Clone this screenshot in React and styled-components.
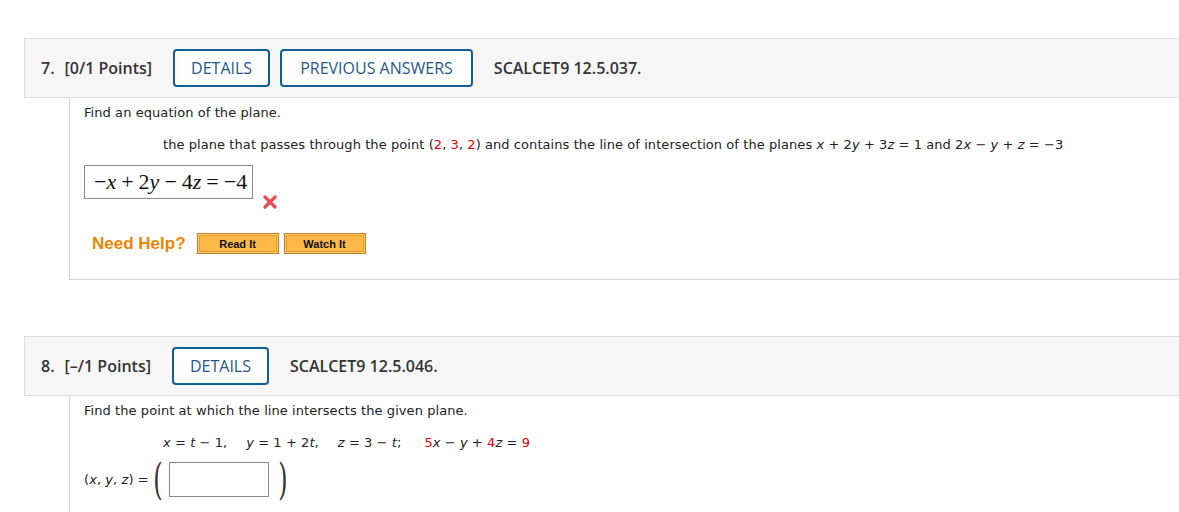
import React from "react";
import styled, { createGlobalStyle } from "styled-components";

const Global = createGlobalStyle`
  html, body { margin: 0; padding: 0; background: #fff; }
  body { font-family: "DejaVu Sans", Verdana, sans-serif; color: #222; }
`;

const Page = styled.div`
  padding: 38px 0 0 24px;
  width: 1155px;
`;

const Question = styled.section`
  margin-bottom: ${(p) => p.$gap || 0}px;
`;

const Header = styled.div`
  display: flex;
  align-items: center;
  height: 58px;
  background: #f6f6f6;
  border: 1px solid #dcdcdc;
  border-right: none;
  padding-left: 16px;
  font-family: "Open Sans", sans-serif;
  font-size: 16px;
  color: #333;
`;

const Num = styled.span`
  font-weight: 600;
  margin-right: 10px;
`;

const Points = styled.span`
  font-weight: 600;
  margin-right: 21px;
`;

const HeadButton = styled.button`
  height: 38px;
  box-sizing: border-box;
  padding: 0 ${(p) => p.$px || 16}px;
  margin-right: ${(p) => p.$mr || 0}px;
  border: 2px solid #0d5f96;
  border-radius: 4px;
  background: #fff;
  color: #1f5788;
  font-family: "Open Sans", sans-serif;
  font-size: 16px;
  cursor: pointer;
`;

const Code = styled.span`
  font-weight: 600;
`;

const Body = styled.div`
  margin-left: 45px;
  border-left: 1px solid #d4d4d4;
  border-bottom: ${(p) => (p.$open ? "none" : "1px solid #d4d4d4")};
  padding: 7px 0 0 14px;
  height: ${(p) => p.$h}px;
  box-sizing: border-box;
  font-size: 13px;
  line-height: 16px;
  letter-spacing: 0.07px;
`;

const Para = styled.p`
  margin: 0;
  padding-left: ${(p) => p.$indent || 0}px;
  margin-bottom: ${(p) => p.$mb || 0}px;
  white-space: nowrap;
`;

const Red = styled.span`
  color: #e00000;
`;

const V = styled.i`
  font-style: italic;
`;

const AnswerRow = styled.div`
  display: flex;
  align-items: flex-start;
`;

const AnswerBox = styled.div`
  width: 169px;
  height: 34px;
  box-sizing: border-box;
  border: 1px solid #8a8a8a;
  display: flex;
  align-items: center;
  padding-left: 9px;
  font-family: "Liberation Serif", "DejaVu Serif", serif;
  font-size: 22px;
  letter-spacing: 0;
  color: #111;
  white-space: nowrap;
`;

const Mi = styled.i`
  font-style: italic;
`;

const Op = styled.span`
  margin: 0 ${(p) => p.$m ?? 5}px;
`;

const Cross = styled.svg`
  margin: 30px 0 0 10px;
`;

const HelpRow = styled.div`
  display: flex;
  align-items: center;
  margin-top: 24px;
  padding-left: 8px;
`;

const NeedHelp = styled.span`
  font-family: "Liberation Sans", Arial, sans-serif;
  font-weight: bold;
  font-size: 17px;
  letter-spacing: 0;
  color: #f08400;
  margin-right: 11px;
`;

const HelpButton = styled.button`
  width: 82px;
  height: 21px;
  box-sizing: border-box;
  margin-right: 5px;
  border: 1px solid #c6791f;
  box-shadow: inset 0 0 0 1px #ffd27a, inset 0 0 0 2px #e59a2c;
  background: #fdb846;
  font-family: "Liberation Sans", Arial, sans-serif;
  font-weight: bold;
  font-size: 11px;
  color: #111;
  padding: 0;
  cursor: pointer;
`;

const Spread = styled.span`
  margin-right: ${(p) => p.$mr}px;
`;

const PointRow = styled.div`
  display: flex;
  align-items: center;
  margin-top: 11px;
`;

const Paren = styled.span`
  font-family: "DejaVu Serif", "Liberation Serif", serif;
  font-weight: 200;
  font-size: 30px;
  color: #333;
  display: inline-block;
  transform: scaleY(1.45) scaleX(0.8);
  margin: ${(p) => p.$m};
`;

const EmptyBox = styled.div`
  width: 100px;
  height: 35px;
  box-sizing: border-box;
  border: 1px solid #8a8a8a;
  background: #fff;
`;

export default function App() {
  return (
    <>
      <Global />
      <Page>
        <Question $gap={56}>
          <Header>
            <Num>7.</Num>
            <Points>[0/1 Points]</Points>
            <HeadButton $mr={10}>DETAILS</HeadButton>
            <HeadButton $mr={21} $px={18}>PREVIOUS ANSWERS</HeadButton>
            <Code>SCALCET9 12.5.037.</Code>
          </Header>
          <Body $h={182}>
            <Para $mb={16}>Find an equation of the plane.</Para>
            <Para $indent={79} $mb={12}>
              the plane that passes through the point (<Red>2</Red>, <Red>3</Red>, <Red>2</Red>) and contains the line of
              intersection of the planes <V>x</V> + 2<V>y</V> + 3<V>z</V> = 1 and 2<V>x</V> − <V>y</V> + <V>z</V> = −3
            </Para>
            <AnswerRow>
              <AnswerBox>
                −<Mi>x</Mi>
                <Op>+</Op>2<Mi>y</Mi>
                <Op>−</Op>4<Mi>z</Mi>
                <Op>=</Op>−4
              </AnswerBox>
              <Cross width="14" height="14" viewBox="0 0 14 14">
                <path d="M2 2 L12 12 M12 2 L2 12" stroke="#ec4a55" strokeWidth="3.2" strokeLinecap="round" />
              </Cross>
            </AnswerRow>
            <HelpRow>
              <NeedHelp>Need Help?</NeedHelp>
              <HelpButton>Read It</HelpButton>
              <HelpButton>Watch It</HelpButton>
            </HelpRow>
          </Body>
        </Question>
        <Question>
          <Header>
            <Num>8.</Num>
            <Points>[–/1 Points]</Points>
            <HeadButton $mr={21}>DETAILS</HeadButton>
            <Code>SCALCET9 12.5.046.</Code>
          </Header>
          <Body $h={120} $open>
            <Para $mb={16}>Find the point at which the line intersects the given plane.</Para>
            <Para $indent={79}>
              <Spread $mr={19}>
                <V>x</V> = <V>t</V> − 1,
              </Spread>
              <Spread $mr={19}>
                <V>y</V> = 1 + 2<V>t</V>,
              </Spread>
              <Spread $mr={23}>
                <V>z</V> = 3 − <V>t</V>;
              </Spread>
              <span>
                <Red>5</Red>
                <V>x</V> − <V>y</V> + <Red>4</Red>
                <V>z</V> = <Red>9</Red>
              </span>
            </Para>
            <PointRow>
              <span>
                (<V>x</V>, <V>y</V>, <V>z</V>) =
              </span>
              <Paren $m="0 5px 0 3px">(</Paren>
              <EmptyBox />
              <Paren $m="0 0 0 8px">)</Paren>
            </PointRow>
          </Body>
        </Question>
      </Page>
    </>
  );
}
